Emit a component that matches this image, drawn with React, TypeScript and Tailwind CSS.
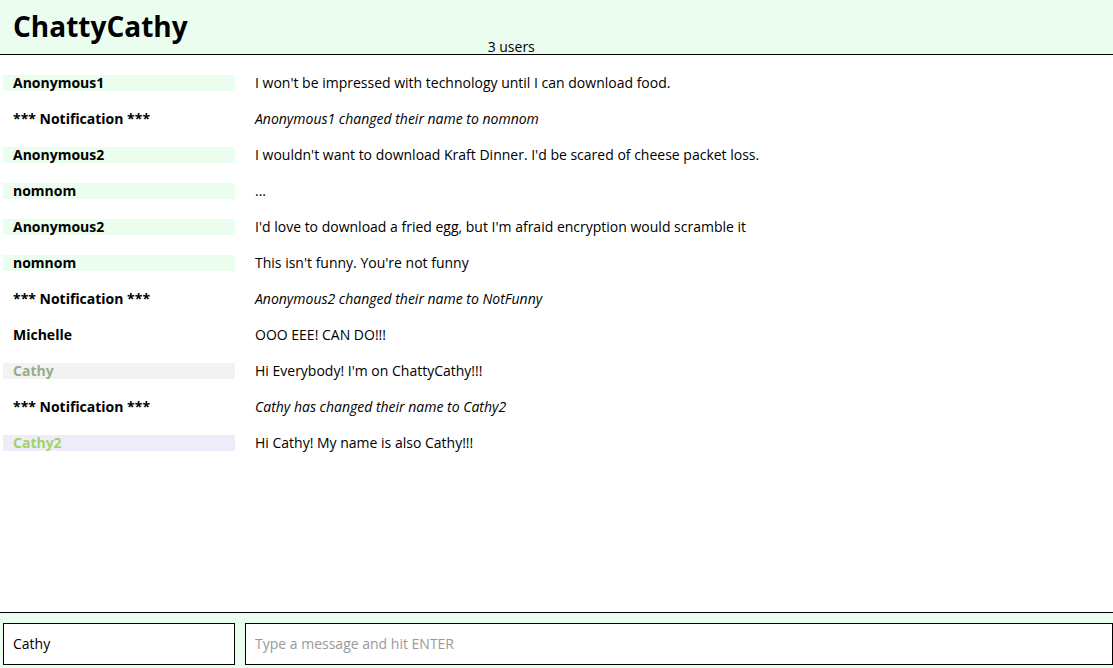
const messages = [
  { name: "Anonymous1", text: "I won't be impressed with technology until I can download food.", nameClass: "bg-[#ebfdee] text-black" },
  { name: "*** Notification ***", text: "Anonymous1 changed their name to nomnom", nameClass: "text-black", notice: true },
  { name: "Anonymous2", text: "I wouldn't want to download Kraft Dinner. I'd be scared of cheese packet loss.", nameClass: "bg-[#ebfdee] text-black" },
  { name: "nomnom", text: "...", nameClass: "bg-[#ebfdee] text-black" },
  { name: "Anonymous2", text: "I'd love to download a fried egg, but I'm afraid encryption would scramble it", nameClass: "bg-[#ebfdee] text-black" },
  { name: "nomnom", text: "This isn't funny. You're not funny", nameClass: "bg-[#ebfdee] text-black" },
  { name: "*** Notification ***", text: "Anonymous2 changed their name to NotFunny", nameClass: "text-black", notice: true },
  { name: "Michelle", text: "OOO EEE! CAN DO!!!", nameClass: "text-black" },
  { name: "Cathy", text: "Hi Everybody! I'm on ChattyCathy!!!", nameClass: "bg-[#f3f3f4] text-[#9aab8b]" },
  { name: "*** Notification ***", text: "Cathy has changed their name to Cathy2", nameClass: "text-black", notice: true },
  { name: "Cathy2", text: "Hi Cathy! My name is also Cathy!!!", nameClass: "bg-[#efecf9] text-[#9dd46a]" },
];

const App = () => {
  return (
    <div
      className="h-screen flex flex-col overflow-hidden bg-white text-black"
      style={{ fontFamily: '"Open Sans", sans-serif' }}
    >
      <header className="h-[55px] bg-[#ebfdee] border-b border-black flex shrink-0">
        <h1 className="pl-[13px] pt-[6px] text-[28px] font-bold leading-[40px]">ChattyCathy</h1>
        <div className="ml-[300px] mt-auto text-sm leading-[18px] mb-[-2px]">3 users</div>
      </header>
      <div className="flex-1 flex flex-col gap-5 pt-5 pl-[3px]">
        {messages.map((msg, idx) => (
          <div className="flex items-center gap-5 h-4" key={idx}>
            <div className={`w-[232px] h-4 pl-[10px] text-sm font-bold leading-4 ${msg.nameClass}`}>
              {msg.name}
            </div>
            <div className={`text-sm leading-4 ${msg.notice ? "italic" : ""}`}>{msg.text}</div>
          </div>
        ))}
      </div>
      <footer className="shrink-0 border-t border-black bg-[#ebfdee] pt-[10px] pb-[3px] pl-[3px] flex gap-[10px]">
        <input
          className="w-[232px] h-[42px] border border-black bg-white px-[9px] pb-[2px] text-sm outline-none"
          defaultValue="Cathy"
        />
        <input
          className="flex-1 h-[42px] border border-black bg-white px-[9px] pb-[2px] text-sm outline-none placeholder:text-[#999]"
          placeholder="Type a message and hit ENTER"
        />
      </footer>
    </div>
  );
};

export default App;
